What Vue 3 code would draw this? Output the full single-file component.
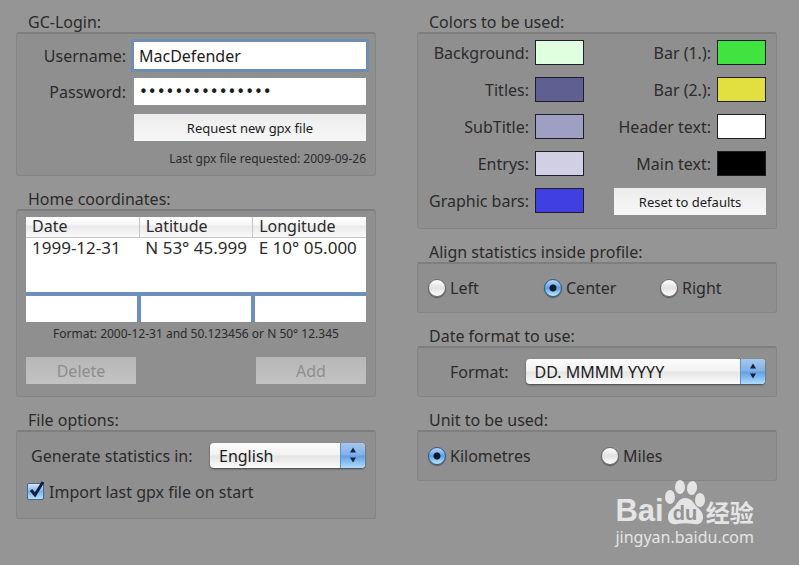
<script setup>
import { ref } from 'vue';

const username = ref('MacDefender');
const password = ref('macdefender2009');
const language = ref('English');
const importOnStart = ref(true);
const align = ref('Center');
const dateFormat = ref('DD. MMMM YYYY');
const unit = ref('Kilometres');

const coordinates = ref([
    { date: '1999-12-31', lat: 'N 53° 45.999', lon: 'E 10° 05.000' }
]);
const newEntry = ref({ date: '', lat: '', lon: '' });

const defaults = {
    left: [
        { id: 'background', label: 'Background:', value: '#dfffdf' },
        { id: 'titles', label: 'Titles:', value: '#5f5f92' },
        { id: 'subtitle', label: 'SubTitle:', value: '#9f9fc4' },
        { id: 'entrys', label: 'Entrys:', value: '#d0cfe3' },
        { id: 'graphic', label: 'Graphic bars:', value: '#4040e2' }
    ],
    right: [
        { id: 'bar1', label: 'Bar (1.):', value: '#40e340' },
        { id: 'bar2', label: 'Bar (2.):', value: '#e1e040' },
        { id: 'header', label: 'Header text:', value: '#ffffff' },
        { id: 'main', label: 'Main text:', value: '#000000' }
    ]
};

const copyDefaults = () => JSON.parse(JSON.stringify(defaults));
const colors = ref(copyDefaults());

const resetColors = () => {
    colors.value = copyDefaults();
};
</script>

<template>
    <main class="prefs">
        <div class="column">
            <section class="group">
                <h2>GC-Login:</h2>
                <form class="box login" @submit.prevent>
                    <label for="username">Username:</label>
                    <input id="username" class="field focused" type="text" v-model="username">
                    <label for="password">Password:</label>
                    <input id="password" class="field" type="password" v-model="password">
                    <button type="button" class="btn request">Request new gpx file</button>
                    <p class="small requested">Last gpx file requested: 2009-09-26</p>
                </form>
            </section>

            <section class="group">
                <h2>Home coordinates:</h2>
                <div class="box home">
                    <div class="list">
                        <table>
                            <thead>
                                <tr><th>Date</th><th>Latitude</th><th>Longitude</th></tr>
                            </thead>
                            <tbody>
                                <tr v-for="(c, index) in coordinates" :key="index">
                                    <td>{{ c.date }}</td>
                                    <td>{{ c.lat }}</td>
                                    <td>{{ c.lon }}</td>
                                </tr>
                            </tbody>
                        </table>
                    </div>
                    <div class="entry">
                        <input type="text" aria-label="Date" v-model="newEntry.date">
                        <input type="text" aria-label="Latitude" v-model="newEntry.lat">
                        <input type="text" aria-label="Longitude" v-model="newEntry.lon">
                    </div>
                    <p class="small hint">Format: 2000-12-31 and 50.123456 or N 50° 12.345</p>
                    <div class="actions">
                        <button type="button" class="btn" disabled>Delete</button>
                        <button type="button" class="btn" disabled>Add</button>
                    </div>
                </div>
            </section>

            <section class="group">
                <h2>File options:</h2>
                <div class="box files">
                    <div class="row">
                        <label for="language">Generate statistics in:</label>
                        <div class="popup">
                            <select id="language" v-model="language">
                                <option>English</option>
                                <option>Deutsch</option>
                            </select>
                            <svg viewBox="0 0 24 24" aria-hidden="true">
                                <path d="M12 4l3 5H9zM12 19l3-5H9z" />
                            </svg>
                        </div>
                    </div>
                    <label class="check">
                        <span class="tick">
                            <input type="checkbox" v-model="importOnStart">
                            <svg v-if="importOnStart" viewBox="0 0 18 20" aria-hidden="true">
                                <path d="M4 10l4 5L16 2" />
                            </svg>
                        </span>
                        Import last gpx file on start
                    </label>
                </div>
            </section>
        </div>

        <div class="column">
            <section class="group">
                <h2>Colors to be used:</h2>
                <div class="box colors">
                    <div class="swatches">
                        <div class="swatch" v-for="c in colors.left" :key="c.id">
                            <label :for="c.id">{{ c.label }}</label>
                            <input type="color" :id="c.id" v-model="c.value">
                        </div>
                    </div>
                    <div class="swatches">
                        <div class="swatch" v-for="c in colors.right" :key="c.id">
                            <label :for="c.id">{{ c.label }}</label>
                            <input type="color" :id="c.id" v-model="c.value">
                        </div>
                        <button type="button" class="btn reset" @click="resetColors">Reset to defaults</button>
                    </div>
                </div>
            </section>

            <section class="group">
                <h2>Align statistics inside profile:</h2>
                <div class="box radios thirds">
                    <label v-for="a in ['Left', 'Center', 'Right']" :key="a">
                        <input type="radio" name="align" :value="a" v-model="align">{{ a }}
                    </label>
                </div>
            </section>

            <section class="group">
                <h2>Date format to use:</h2>
                <div class="box row format">
                    <label for="format">Format:</label>
                    <div class="popup">
                        <select id="format" v-model="dateFormat">
                            <option>DD. MMMM YYYY</option>
                            <option>YYYY-MM-DD</option>
                        </select>
                        <svg viewBox="0 0 24 24" aria-hidden="true">
                            <path d="M12 4l3 5H9zM12 19l3-5H9z" />
                        </svg>
                    </div>
                </div>
            </section>

            <section class="group">
                <h2>Unit to be used:</h2>
                <div class="box radios halves">
                    <label v-for="u in ['Kilometres', 'Miles']" :key="u">
                        <input type="radio" name="unit" :value="u" v-model="unit">{{ u }}
                    </label>
                </div>
            </section>
        </div>

        <div class="watermark">
            <div class="brand">
                <span class="bai">Bai</span>
                <svg class="paw" viewBox="0 0 42 46" aria-hidden="true">
                    <ellipse cx="6" cy="17" rx="5" ry="7" />
                    <ellipse cx="16" cy="7" rx="5" ry="7" />
                    <ellipse cx="28" cy="8" rx="5" ry="7" transform="rotate(8 28 8)" />
                    <ellipse cx="36" cy="20" rx="5" ry="7" />
                    <path d="M21 18c6 0 8 4 11 8 4 4 7 6 7 11 0 6-4 8-9 7-6-1-12-1-17 0-6 1-9-2-9-7 0-6 4-8 7-11 3-4 5-8 10-8z" />
                    <text x="21" y="40" text-anchor="middle">du</text>
                </svg>
                <span class="jingyan">经验</span>
            </div>
            <div class="site">jingyan.baidu.com</div>
        </div>
    </main>
</template>

<style>
body {
    margin: 0;
    background: #959595;
}
</style>

<style scoped>
.prefs {
    position: relative;
    display: grid;
    grid-template-columns: 1fr 1fr;
    gap: 41px;
    min-height: 100vh;
    box-sizing: border-box;
    padding: 12px 22px 12px 16px;
    font-family: "Noto Sans", "Open Sans", sans-serif;
    font-size: 16px;
    line-height: 20px;
    color: #2b2b2b;
}

.prefs *,
.prefs *::before {
    box-sizing: border-box;
}

.column {
    display: flex;
    flex-direction: column;
    gap: 13px;
    min-width: 0;
}

h2 {
    margin: 0;
    padding-left: 12px;
    font-size: 16px;
    font-weight: 400;
    line-height: 20px;
}

.box {
    border: 1px solid #858585;
    border-top: 2px solid #7e7e7e;
    border-radius: 3px;
    background: #8f8f8f;
}

p {
    margin: 0;
}

.small {
    font-size: 12px;
    line-height: 18px;
}

input,
select,
button {
    margin: 0;
    font-family: inherit;
    font-size: 16px;
    color: #1c1c1c;
}

/* GC-Login */
.login {
    display: grid;
    grid-template-columns: 100px 1fr;
    gap: 9px 8px;
    align-items: center;
    padding: 8px 9px 7px;
}

.login label {
    text-align: right;
}

.field {
    width: 100%;
    height: 27px;
    padding: 0 5px;
    border: 0;
    background: #fff;
    outline: none;
}

.field[type="password"] {
    font-family: "DejaVu Sans", sans-serif;
    font-size: 15px;
}

.focused {
    box-shadow: 0 0 0 3px #6d8db5;
}

.btn {
    height: 27px;
    padding: 0;
    border: 0;
    background: linear-gradient(#ececec, #f7f7f7);
    font-size: 13px;
}

.btn:disabled {
    background: linear-gradient(#b7b7b7, #c2c2c2);
    font-size: 16px;
    color: #8e8e8e;
}

.request {
    grid-column: 2;
}

.requested {
    grid-column: 1 / 3;
    text-align: right;
}

/* Home coordinates */
.home {
    padding: 6px 9px 12px;
}

.list {
    height: 75px;
    background: #fff;
}

table {
    width: 100%;
    table-layout: fixed;
    border-collapse: collapse;
}

th,
td {
    padding: 0 0 0 6px;
    font-weight: 400;
    text-align: left;
    white-space: nowrap;
}

th {
    height: 20px;
    border-bottom: 1px solid #c4c4c4;
    background: linear-gradient(#fff 0%, #f6f6f6 40%, #e9e9e9 45%, #fafafa 100%);
    line-height: 19px;
}

th + th {
    border-left: 1px solid #c4c4c4;
}

td {
    font-size: 17px;
}

.entry {
    display: grid;
    grid-template-columns: repeat(3, 1fr);
    gap: 4px;
    padding-top: 4px;
    background: #6d90ba;
}

.entry input {
    width: 100%;
    height: 26px;
    padding: 0 5px;
    border: 0;
    background: #fff;
    outline: none;
}

.hint {
    margin: 3px 0 14px;
    text-align: center;
}

.actions {
    display: grid;
    grid-template-columns: 110px 110px;
    justify-content: space-between;
}

/* File options */
.files {
    padding: 11px 10px 15px;
}

.row {
    display: flex;
    align-items: center;
    justify-content: space-between;
}

.files .row {
    padding-left: 4px;
}

.popup {
    position: relative;
    width: 155px;
}

.popup select {
    display: block;
    width: 100%;
    height: 25px;
    padding: 0 30px 0 9px;
    border: 0;
    border-radius: 4px;
    appearance: none;
    background: linear-gradient(#fdfdfd 0%, #f1f1f1 48%, #e4e4e4 52%, #fbfbfb 100%);
    box-shadow: 0 1px 2px #444;
}

.popup svg {
    position: absolute;
    top: 0;
    right: 0;
    width: 25px;
    height: 25px;
    border-left: 1px solid #5f8fc4;
    border-radius: 0 4px 4px 0;
    background: linear-gradient(#a5c8ee 0%, #7fb0e8 48%, #5f9fe4 52%, #aedcfb 100%);
    fill: #14233f;
    pointer-events: none;
}

.check {
    display: flex;
    align-items: center;
    gap: 4px;
    margin-top: 13px;
    line-height: 22px;
}

.tick {
    position: relative;
    width: 18px;
    height: 18px;
}

.tick input {
    display: block;
    width: 17px;
    height: 17px;
    border: 1px solid #44688f;
    border-radius: 2px;
    appearance: none;
    background: linear-gradient(#d3e7fb, #7fb1e8 50%, #b5e0fc);
}

.tick svg {
    position: absolute;
    top: -3px;
    left: 0;
    width: 18px;
    height: 20px;
    fill: none;
    stroke: #0f1f44;
    stroke-width: 3;
    pointer-events: none;
}

/* Colors */
.colors {
    display: grid;
    grid-template-columns: 11fr 12fr;
    padding: 6px 10px 13px 9px;
}

.swatches {
    display: flex;
    flex-direction: column;
    gap: 12px;
}

.swatches:first-child {
    width: 157px;
}

.swatch {
    display: flex;
    align-items: center;
    justify-content: flex-end;
    gap: 6px;
    white-space: nowrap;
}

.swatch input {
    width: 49px;
    height: 25px;
    padding: 0;
    border: 1px solid #1e1e28;
    appearance: none;
    background: none;
}

.swatch input::-webkit-color-swatch-wrapper {
    padding: 0;
}

.swatch input::-webkit-color-swatch {
    border: 0;
    border-radius: 0;
}

.reset {
    align-self: flex-end;
    width: 152px;
}

/* Radio groups */
.radios {
    display: grid;
    padding: 14px 10px;
}

.thirds {
    grid-template-columns: repeat(3, 116px);
}

.halves {
    grid-template-columns: 173px 1fr;
}

.radios label {
    display: flex;
    align-items: center;
    gap: 4px;
}

.radios input {
    width: 18px;
    height: 18px;
    border: 1px solid #6c6c6c;
    border-radius: 50%;
    appearance: none;
    background: linear-gradient(#fff, #e2e2e2 50%, #fff);
    box-shadow: 0 1px 1px #555;
}

.radios input:checked {
    border-color: #2f588f;
    background: radial-gradient(circle, #0b1730 0 3px, transparent 4px), linear-gradient(#b9d6f5, #5f9fe6 50%, #b9ecff);
}

/* Date format */
.format {
    gap: 17px;
    padding: 11px 11px 12px 32px;
}

.format .popup {
    flex: 1;
}

/* Watermark */
.watermark {
    position: absolute;
    right: 45px;
    bottom: 17px;
    color: #e4e4e4;
}

.brand {
    display: flex;
    align-items: flex-end;
    height: 46px;
}

.bai {
    font-family: "Liberation Sans", sans-serif;
    font-size: 31px;
    font-weight: 700;
    line-height: 30px;
}

.paw {
    width: 42px;
    height: 46px;
    fill: #e4e4e4;
}

.paw text {
    fill: #929292;
    font-family: "Liberation Sans", sans-serif;
    font-size: 20px;
    font-weight: 700;
}

.jingyan {
    font-family: "Noto Sans CJK SC", sans-serif;
    font-size: 24px;
    font-weight: 700;
    line-height: 28px;
}

.site {
    font-size: 16px;
    line-height: 22px;
}
</style>
